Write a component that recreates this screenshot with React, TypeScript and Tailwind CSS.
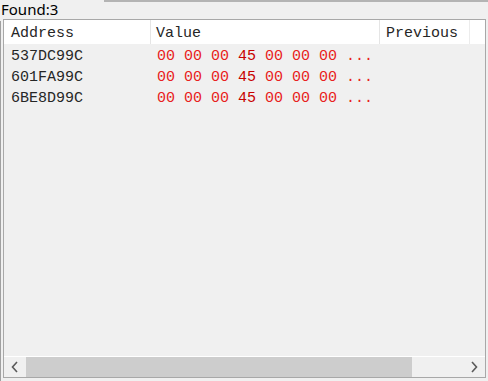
import React from 'react'

const rows = ['537DC99C', '601FA99C', '6BE8D99C']

function Chevron({ dir }: { dir: 'left' | 'right' }) {
  return (
    <svg width="8" height="12" viewBox="0 0 8 12" fill="none">
      <polyline
        points={dir === 'left' ? '6,1 1.5,6 6,11' : '2,1 6.5,6 2,11'}
        stroke="#5a5a5a"
        strokeWidth="1.6"
      />
    </svg>
  )
}

export default function App() {
  const mono = { fontFamily: '"Liberation Mono", "Courier New", monospace' }

  return (
    <div className="w-[488px] h-[381px] bg-[#f0f0f0] overflow-hidden flex flex-col">
      <div className="h-[19px] flex shrink-0">
        <div
          className="w-[104px] text-[15px] leading-[18px] text-black pl-[1px]"
          style={{ fontFamily: '"Noto Sans", "Open Sans", sans-serif' }}
        >
          Found:3
        </div>
        <div className="flex-1 border-t-2 border-[#b4b4b4]" />
      </div>

      <div className="flex flex-1">
        <div className="w-[3px] border-l border-[#a0a0a0] mt-[2px]" />
        <div className="w-[483px] h-[359px] border border-[#a8a8a8] flex flex-col" style={mono}>
          <div className="h-[24px] bg-white flex text-[15px] leading-[24px] text-[#262626] shrink-0">
            <div className="w-[147px] pl-[7px] pt-[2px] border-r border-[#e5e5e5]">Address</div>
            <div className="w-[229px] pl-[5px] pt-[2px] border-r border-[#e5e5e5]">Value</div>
            <div className="w-[90px] pl-[6px] pt-[2px] border-r border-[#ececec]">Previous</div>
            <div className="flex-1" />
          </div>

          <div className="flex-1 text-[15px] pt-[2px]">
            {rows.map((addr) => (
              <div key={addr} className="h-[21px] leading-[21px] flex">
                <div className="w-[148px] pl-[7px] text-[#262626]">{addr}</div>
                <div className="w-[230px] pl-[5px] text-[#e82020] whitespace-pre">
                  00 00 00 <span className="text-[#c80000]">45</span> 00 00 00 ...
                </div>
              </div>
            ))}
          </div>

          <div className="h-[21px] border-t border-white flex shrink-0">
            <div className="w-[22px] flex items-center justify-center">
              <Chevron dir="left" />
            </div>
            <div className="flex-1 flex">
              <div className="w-[386px] bg-[#cdcdcd]" />
            </div>
            <div className="w-[22px] flex items-center justify-center">
              <Chevron dir="right" />
            </div>
          </div>
        </div>
      </div>
    </div>
  )
}
